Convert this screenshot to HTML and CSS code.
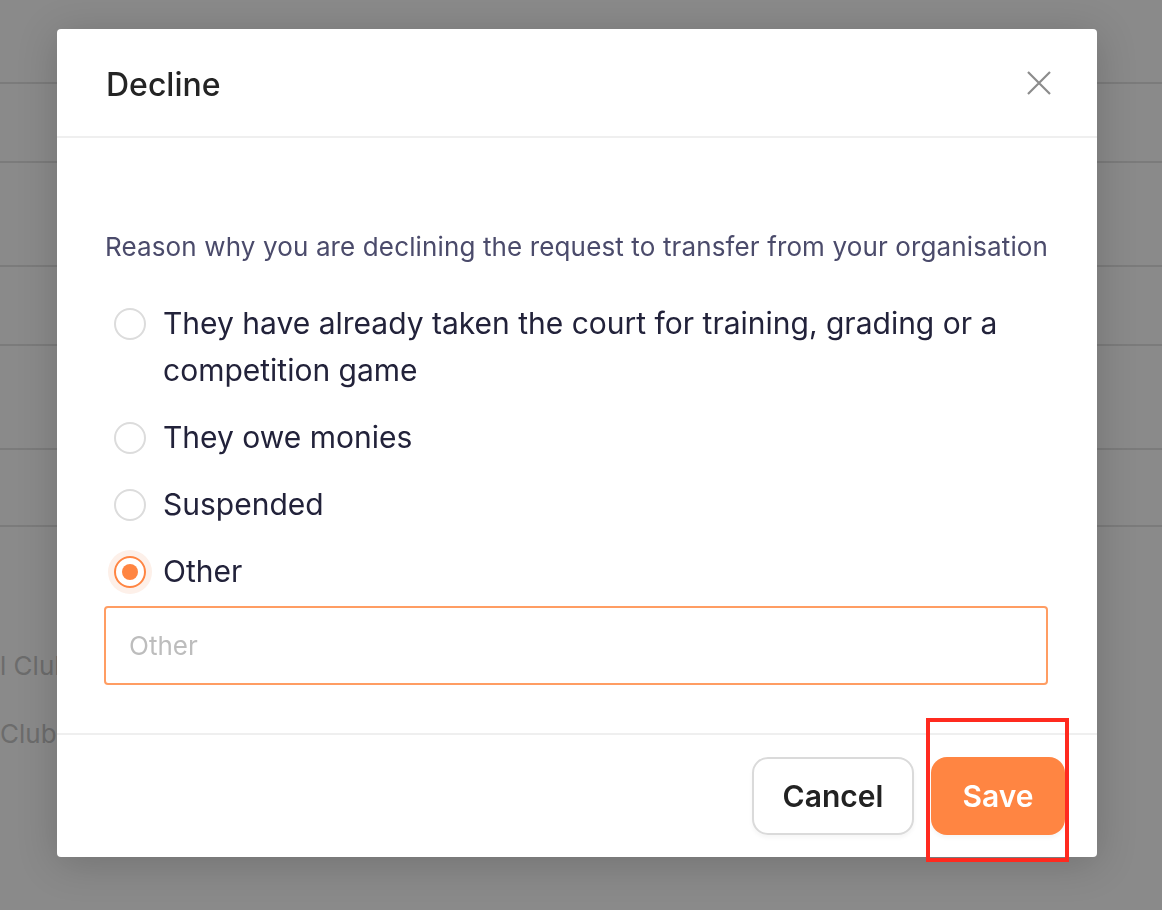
FILE: index.html
```html
<!DOCTYPE html>
<html lang="en">
<head>
  <meta charset="UTF-8">
  <meta name="viewport" content="width=device-width, initial-scale=1">
  <title>Decline transfer</title>
  <link rel="stylesheet" href="styles.css">
</head>
<body>
  <div class="page">
    <div class="row row-head"></div>
    <div class="row row-a"></div>
    <div class="row row-b"></div>
    <div class="row row-a"></div>
    <div class="row row-b"></div>
    <div class="row row-c"></div>
    <div class="club-list">
      <p class="club">l Club</p>
      <p class="club">Club</p>
    </div>
  </div>

  <div class="overlay">
    <div class="modal">
      <div class="modal-header">
        <h2>Decline</h2>
        <button class="close" aria-label="Close">
          <svg width="26" height="24" viewBox="0 0 26 24">
            <path d="M2 1 L24 23 M24 1 L2 23" stroke="#8c8c8c" stroke-width="2.2" fill="none"/>
          </svg>
        </button>
      </div>

      <div class="modal-body">
        <p class="question">Reason why you are declining the request to transfer from your organisation</p>

        <div class="options">
          <label class="option">
            <span class="radio"></span>
            <span class="label-text">They have already taken the court for training, grading or a competition game</span>
          </label>
          <label class="option">
            <span class="radio"></span>
            <span class="label-text">They owe monies</span>
          </label>
          <label class="option">
            <span class="radio"></span>
            <span class="label-text">Suspended</span>
          </label>
          <label class="option checked">
            <span class="radio"></span>
            <span class="label-text">Other</span>
          </label>
        </div>

        <input type="text" class="other-input" placeholder="Other">
      </div>

      <div class="modal-footer">
        <button class="btn btn-cancel">Cancel</button>
        <div class="save-wrap">
          <button class="btn btn-save">Save</button>
          <span class="highlight"></span>
        </div>
      </div>
    </div>
  </div>
</body>
</html>
```

FILE: styles.css
```css
body {
  margin: 0;
  font-family: 'Inter', 'Noto Sans', sans-serif;
  background: #8a8a8a;
  height: 910px;
  overflow: hidden;
}

/* page behind the overlay */
.page {
  width: 100%;
}
.row {
  border-bottom: 2px solid #7b7b7b;
}
.row-head { height: 82px; }
.row-a { height: 77px; }
.row-b { height: 102px; }
.row-c { height: 75px; }
.club-list {
  padding-top: 105px;
}
.club {
  margin: 0;
  font-size: 26px;
  line-height: 68px;
  color: #6c6c6c;
}

/* modal */
.overlay {
  position: fixed;
  inset: 0;
  padding: 29px 0 0 57px;
}
.modal {
  width: 1040px;
  background: #fff;
  border-radius: 4px;
  box-shadow: 0 6px 40px rgba(0, 0, 0, 0.18);
  position: relative;
}
.modal-header {
  height: 107px;
  padding: 0 45px 0 49px;
  display: flex;
  align-items: center;
  justify-content: space-between;
  border-bottom: 2px solid #efefef;
}
.modal-header h2 {
  margin: 4px 0 0;
  font-size: 32px;
  font-weight: 500;
  color: #242424;
}
.close {
  border: none;
  background: none;
  padding: 0;
  width: 26px;
  height: 24px;
  cursor: pointer;
}
.close svg {
  display: block;
}

.modal-body {
  padding: 93px 48px 48px 48px;
}
.question {
  margin: 0 0 37px;
  font-size: 26px;
  line-height: 32px;
  letter-spacing: 0.13px;
  color: #4b4b6b;
}
.options {
  display: flex;
  flex-direction: column;
  gap: 20px;
}
.option {
  display: flex;
  align-items: flex-start;
  gap: 17px;
  font-size: 30px;
  line-height: 47px;
  color: #22223a;
  cursor: pointer;
}
.radio {
  flex: none;
  width: 32px;
  height: 32px;
  margin: 8px 0 0 9px;
  box-sizing: border-box;
  border: 2px solid #dcdcdc;
  border-radius: 50%;
  position: relative;
}
.option.checked .radio {
  border-color: #ff8542;
  box-shadow: 0 0 0 6px #fdf0e9;
}
.option.checked .radio::after {
  content: "";
  position: absolute;
  left: 6px;
  top: 6px;
  width: 16px;
  height: 16px;
  border-radius: 50%;
  background: #ff8542;
}

.other-input {
  display: block;
  box-sizing: border-box;
  width: 944px;
  height: 79px;
  margin: 11px 0 0 -1px;
  padding: 0 23px;
  border: 2px solid #ff9d63;
  border-radius: 4px;
  font-family: inherit;
  font-size: 26px;
  color: #222;
  outline: none;
}
.other-input::placeholder {
  color: #bdbdbd;
}

.modal-footer {
  border-top: 2px solid #efefef;
  padding: 22px 32px 22px;
  display: flex;
  justify-content: flex-end;
  gap: 17px;
}
.btn {
  height: 78px;
  border-radius: 16px;
  font-family: inherit;
  font-size: 30px;
  font-weight: 600;
  cursor: pointer;
  box-shadow: 0 3px 4px rgba(0, 0, 0, 0.04);
}
.btn-cancel {
  width: 162px;
  background: #fff;
  border: 2px solid #dadada;
  color: #222;
}
.btn-save {
  width: 134px;
  background: #ff8542;
  border: none;
  color: #fff;
}
.save-wrap {
  position: relative;
}
.highlight {
  position: absolute;
  left: -5px;
  right: -4px;
  top: -39px;
  bottom: -27px;
  border: 4px solid #ff2a1f;
  pointer-events: none;
}
```
